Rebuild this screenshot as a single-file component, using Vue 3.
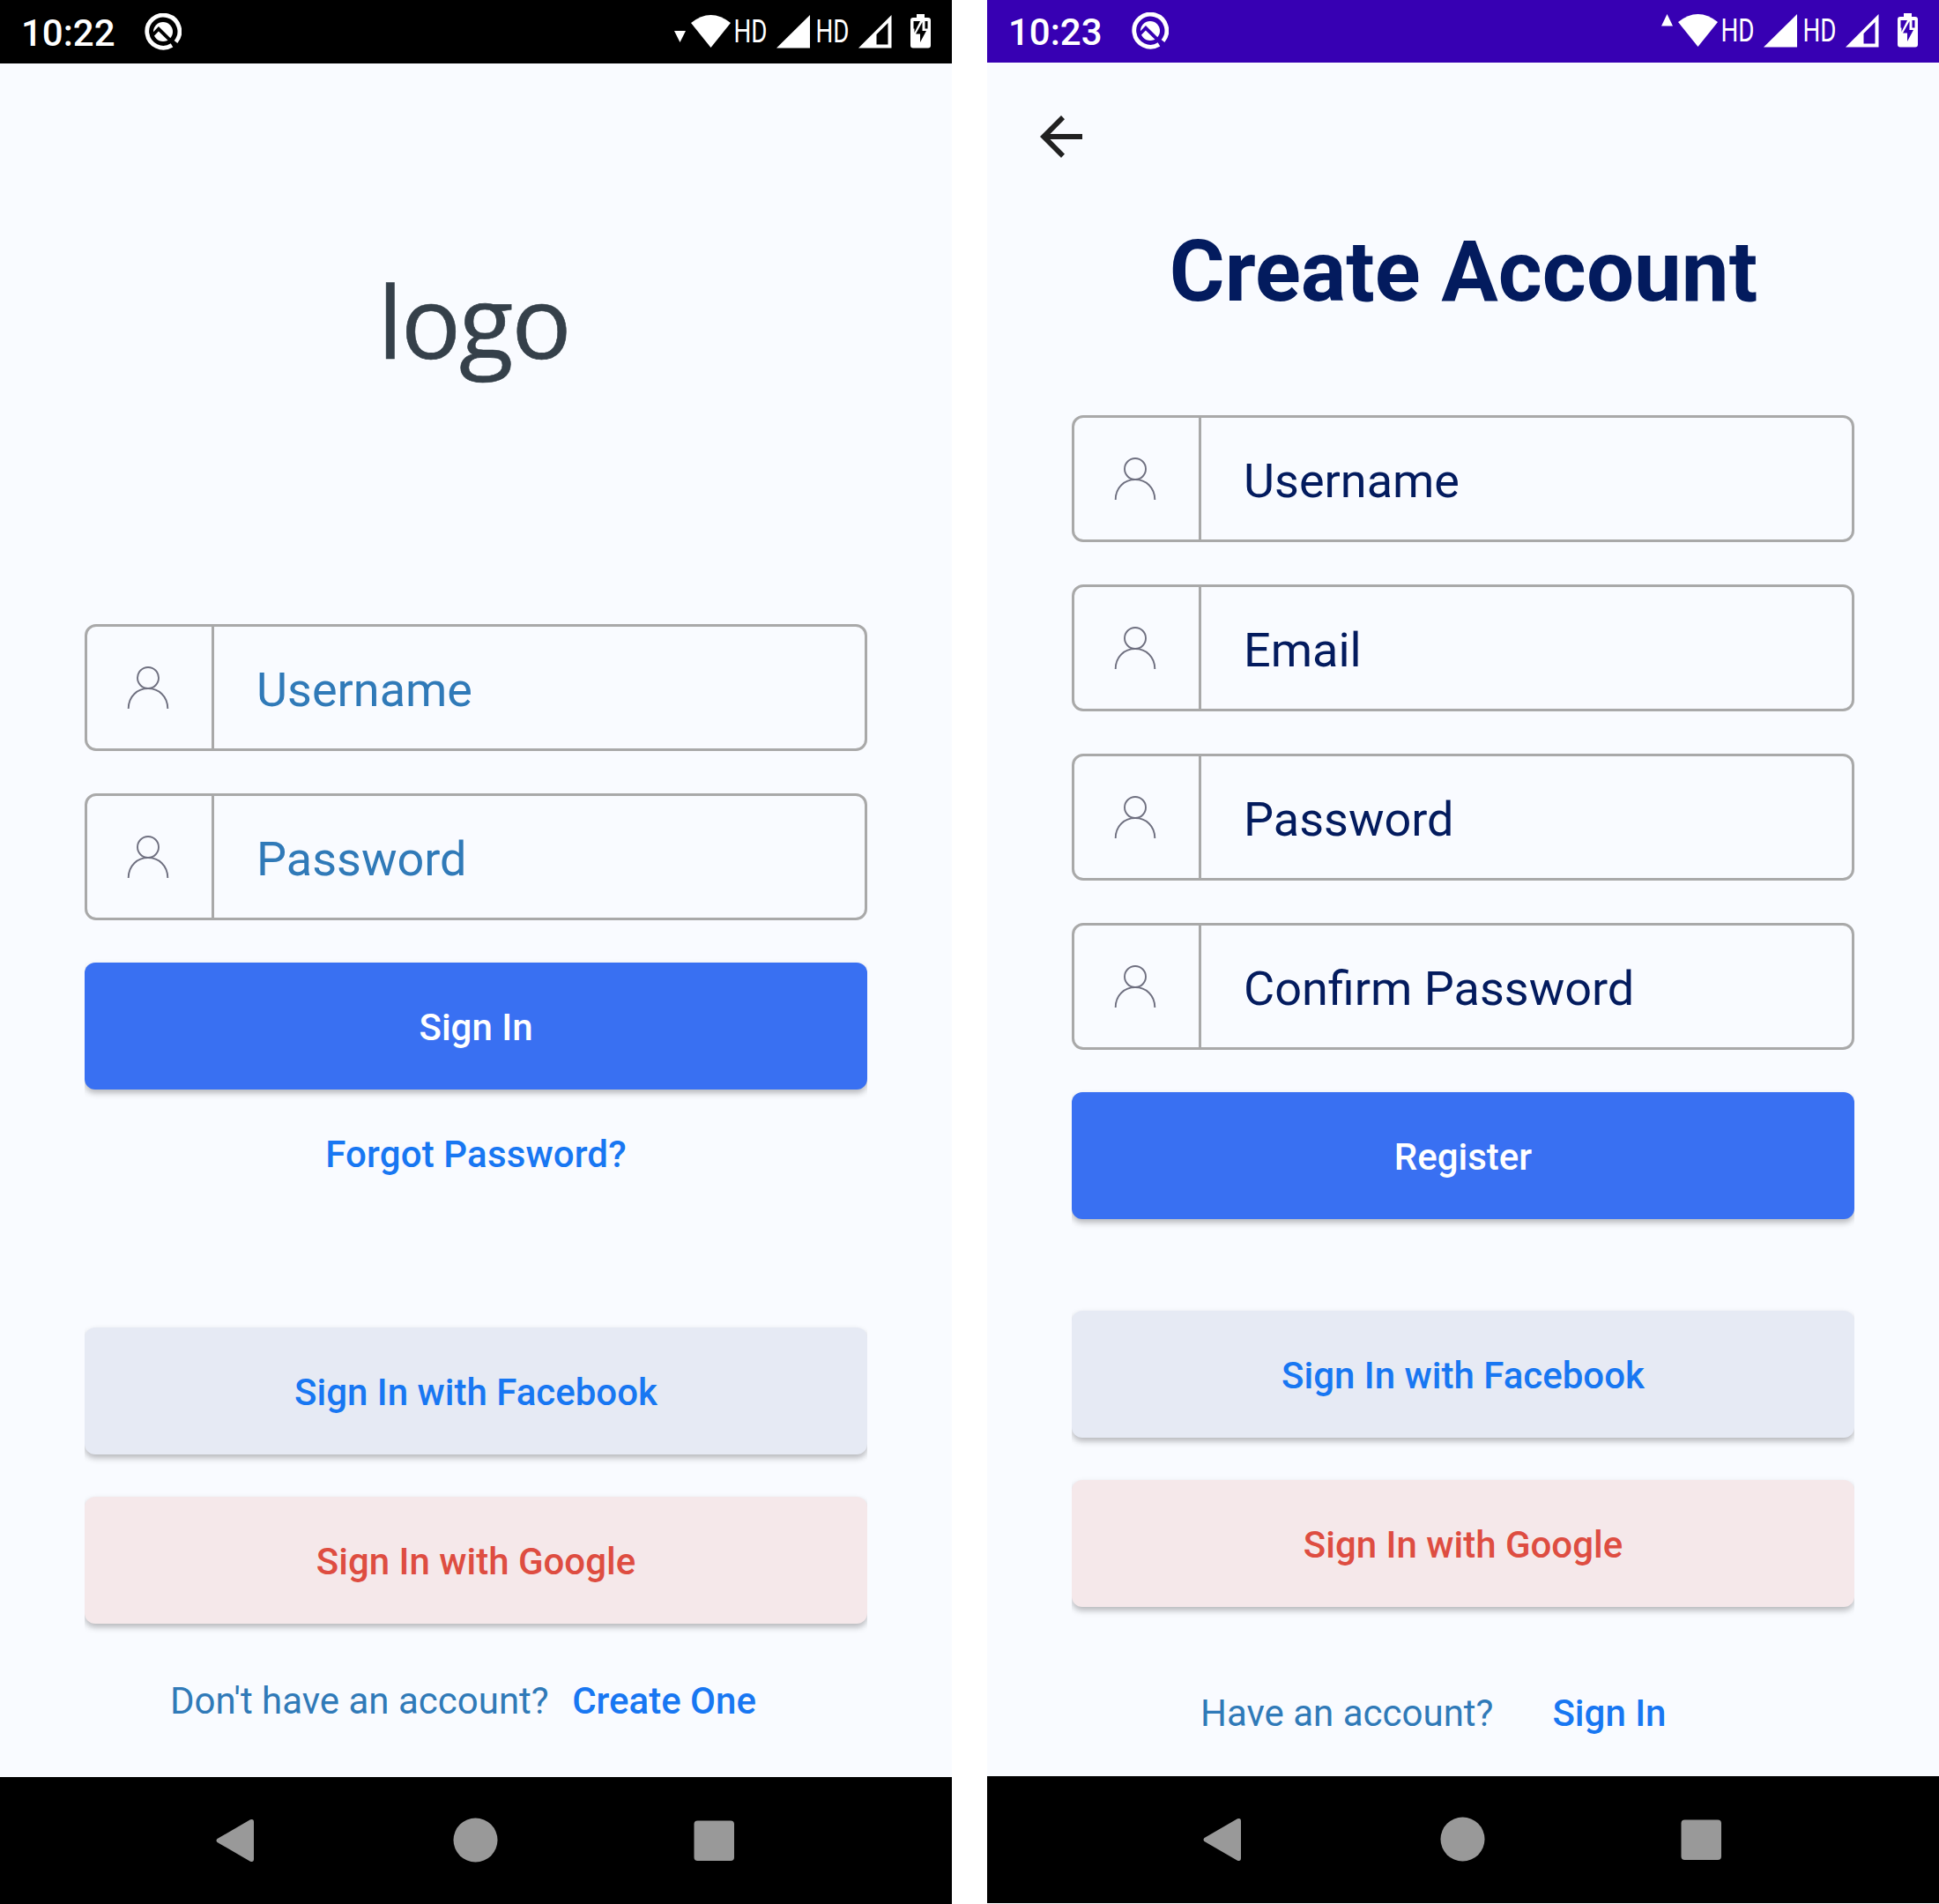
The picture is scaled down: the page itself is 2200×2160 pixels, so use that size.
<script setup>
const phones = [
  {
    id: 'login', time: '10:22', traffic: '2,35 15,35 8.5,48',
    fields: ['Username', 'Password'], submit: 'Sign In', forgot: 'Forgot Password?',
    question: "Don't have an account?", link: 'Create One',
  },
  {
    id: 'register', time: '10:23', traffic: '2,30.5 15,30.5 8.5,17',
    fields: ['Username', 'Email', 'Password', 'Confirm Password'], submit: 'Register', forgot: '',
    question: 'Have an account?', link: 'Sign In',
  },
]
</script>

<template>
  <main class="board">
    <section v-for="p in phones" :key="p.id" class="phone" :class="p.id">
      <header class="status">
        <span class="clock">{{ p.time }}</span>
        <svg class="q" width="42" height="42" viewBox="0 0 42 42">
          <path d="M31 36.400A18.500 18.500 0 1 1 35.500 32.500" fill="none" stroke="#fff" stroke-width="4.800" />
          <circle cx="21" cy="21" r="11" fill="#fff" />
          <path d="M9 25L16 17.800L35.500 37" fill="none" stroke="currentColor" stroke-width="3.800" />
        </svg>
        <svg class="icons" width="300" height="71" viewBox="0 0 300 71" fill="#fff">
          <polygon :points="p.traffic" />
          <path d="M21 26Q43.500 8 66 26L43.500 54Z" />
          <text x="69.500" y="48" class="hd" textLength="38" lengthAdjust="spacingAndGlyphs">HD</text>
          <path d="M156 17V54.500H118Z" />
          <text x="162.500" y="48" class="hd" textLength="38" lengthAdjust="spacingAndGlyphs">HD</text>
          <path fill-rule="evenodd" d="M248.500 17V54.500H211ZM244.500 26L231.500 39V50.500H244.500Z" />
          <path d="M277 16h9v4h4q3 0 3 3v28.500q0 3-3 3h-17q-3 0-3-3v-28.500q0-3 3-3h4z" />
          <path d="M273.500 24H281L274.500 37V32.500H273.500ZM286.500 24H289.500V32.500H286.500Z" fill="currentColor" />
          <path d="M283.500 25V35H288L281 48V38.500H276Z" fill="currentColor" />
        </svg>
      </header>

      <div class="body">
        <div v-if="p.id === 'login'" class="logo">logo</div>
        <template v-else>
          <svg class="back" width="48" height="48" viewBox="0 0 48 48">
            <path d="M48 21H11.500L28 4.200L24 0L0 24L24 48L28 43.800L11.500 27H48Z" fill="#212121" />
          </svg>
          <h1>Create Account</h1>
        </template>

        <div class="form">
          <div v-for="f in p.fields" :key="f" class="field">
            <div class="lead">
              <svg width="48" height="50" viewBox="0 0 48 50" fill="none" stroke="#6f7080" stroke-width="1.900">
                <circle cx="24" cy="13" r="12" />
                <path d="M1.700 48C1.700 34 12 25 24 25S46.300 34 46.300 48" />
              </svg>
            </div>
            <span class="label">{{ f }}</span>
          </div>
          <div class="btn primary"><span>{{ p.submit }}</span></div>
        </div>
        <div v-if="p.forgot" class="forgot">{{ p.forgot }}</div>
        <div class="social">
          <div class="btn facebook"><span>Sign In with Facebook</span></div>
          <div class="btn google"><span>Sign In with Google</span></div>
        </div>
        <div class="foot">
          <span>{{ p.question }}</span><b>{{ p.link }}</b>
        </div>
      </div>

      <footer class="nav">
        <svg width="1080" height="144" viewBox="0 0 1080 144" fill="#999">
          <path d="M284 48.300L246.500 70Q244.500 72 246.500 74L284 95.700Q288 97 288 93V51Q288 47 284 48.300Z" />
          <circle cx="539.500" cy="71.500" r="25" />
          <rect x="787.500" y="49.500" width="45.500" height="45.500" rx="4" />
        </svg>
      </footer>
    </section>
  </main>
</template>

<style>
body { margin: 0; background: #fff; }
</style>

<style scoped>
.board { width: 2200px; height: 2160px; display: flex; gap: 40px; overflow: hidden; font-family: Roboto, "Liberation Sans", sans-serif; }
.phone { width: 1080px; display: flex; flex-direction: column; color: #307ab8; }
.status { flex: none; height: 72px; background: #000; color: #000; display: flex; align-items: flex-start; box-sizing: border-box; padding: 0 17px 0 24px; }
.register .status { height: 71px; background: #3700b3; color: #3700b3; }
.register .status > * { transform: translateY(-1px); }
.clock { width: 140px; color: #fff; font-size: 42px; font-weight: 500; line-height: 49px; padding-top: 13px; white-space: nowrap; }
.q { margin-top: 15px; }
.icons { margin-left: auto; }
.hd { font: 36px Roboto, sans-serif; }
.body { flex: none; height: 1944px; background: #f9fbff; display: flex; flex-direction: column; }
.logo { height: 636px; box-sizing: border-box; padding: 211px 5px 0 0; text-align: center; font: 113px/160px "Open Sans", sans-serif; letter-spacing: -2px; color: #35404a; -webkit-text-stroke: .6px #35404a; }
.back { margin: 60px 0 0 60px; }
h1 { margin: 73px 0 106px; height: 113px; font-size: 96px; line-height: 113px; text-align: center; text-indent: 1px; font-weight: 700; color: #031b5e; }
.form, .social { display: flex; flex-direction: column; gap: 48px; padding: 0 96px; }
.field { height: 144px; box-sizing: border-box; border: 3px solid #a9a9a9; border-radius: 13px; display: flex; }
.lead { width: 144px; box-sizing: border-box; border-right: 3px solid #a9a9a9; display: flex; justify-content: center; padding: 45px 3px 0 0; }
.label { padding: 2.5px 0 0 48px; font-size: 54px; line-height: 138px; height: 138px; box-sizing: border-box; white-space: nowrap; }
.register .label { color: #031b5e; }
.btn { height: 144px; border-radius: 12px; display: flex; align-items: center; justify-content: center; font-size: 42px; font-weight: 500; color: #1877f2; box-shadow: 0 4px 7px rgba(0, 0, 0, .27); clip-path: inset(-6px 0 -14px 0); }
.btn span { padding-top: 2px; }
.primary { background: #3970f2; color: #fff; }
.facebook { background: #e6eaf4; }
.google { background: #f5e8ea; color: #de4d41; }
.forgot { height: 49px; margin-top: 49px; text-align: center; color: #1877f2; font-size: 42px; line-height: 49px; font-weight: 500; letter-spacing: .15px; }
.login .social { margin-top: 172px; }
.register .social { margin-top: 104px; }
.foot { display: flex; font-size: 42px; line-height: 49px; margin-top: 63px; padding-left: 193px; white-space: nowrap; }
.foot b { margin-left: 26.5px; font-weight: 500; color: #1877f2; }
.register .foot { margin-top: 96px; padding-left: 242px; }
.register .foot b { margin-left: 67px; }
.nav { flex: none; height: 144px; background: #000; }
.nav svg { display: block; }
</style>
